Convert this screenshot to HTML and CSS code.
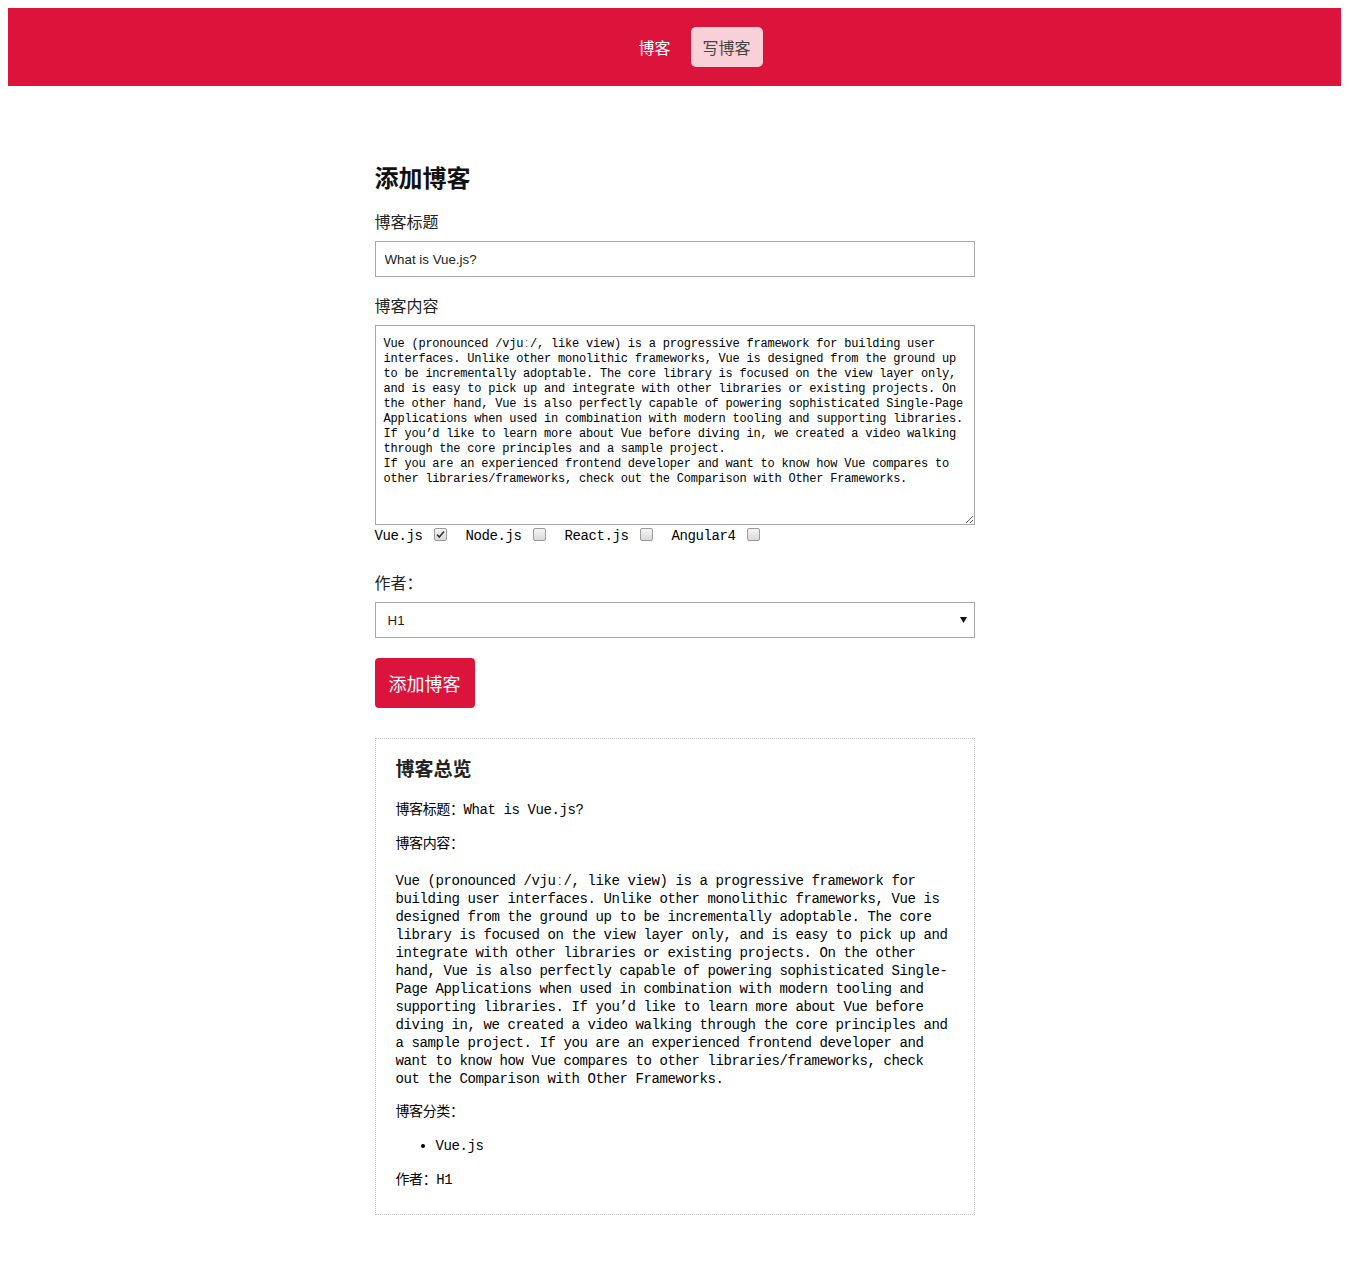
FILE: index.html
```html
<!DOCTYPE html>
<html lang="zh-CN">
<head>
<meta charset="utf-8">
<title>博客</title>
<link rel="stylesheet" href="styles.css">
</head>
<body>
<header class="topbar">
  <ul class="nav">
    <li><a class="nav-link" href="#">博客</a></li>
    <li><a class="nav-link active" href="#">写博客</a></li>
  </ul>
</header>
<main class="add-blog">
  <h2 class="page-title">添加博客</h2>
  <form class="blog-form">
    <label class="field-label">博客标题</label>
    <input class="text-input" type="text" value="What is Vue.js?">
    <label class="field-label">博客内容</label>
    <textarea class="content-input">Vue (pronounced /vjuː/, like view) is a progressive framework for building user interfaces. Unlike other monolithic frameworks, Vue is designed from the ground up to be incrementally adoptable. The core library is focused on the view layer only, and is easy to pick up and integrate with other libraries or existing projects. On the other hand, Vue is also perfectly capable of powering sophisticated Single-Page Applications when used in combination with modern tooling and supporting libraries.
If you’d like to learn more about Vue before diving in, we created a video walking through the core principles and a sample project.
If you are an experienced frontend developer and want to know how Vue compares to other libraries/frameworks, check out the Comparison with Other Frameworks.</textarea>
    <div class="categories">
      <label class="cat">Vue.js</label><input class="cat-box" type="checkbox" checked>
      <label class="cat">Node.js</label><input class="cat-box" type="checkbox">
      <label class="cat">React.js</label><input class="cat-box" type="checkbox">
      <label class="cat">Angular4</label><input class="cat-box" type="checkbox">
    </div>
    <label class="field-label author-label">作者：</label>
    <select class="select-input">
      <option>H1</option>
      <option>H2</option>
    </select>
    <button class="submit-btn" type="button">添加博客</button>
  </form>
  <section class="preview">
    <h3 class="preview-title">博客总览</h3>
    <p class="pv-line pv-first">博客标题：What is Vue.js?</p>
    <p class="pv-line">博客内容：</p>
    <p class="pv-body">Vue (pronounced /vjuː/, like view) is a progressive framework for building user interfaces. Unlike other monolithic frameworks, Vue is designed from the ground up to be incrementally adoptable. The core library is focused on the view layer only, and is easy to pick up and integrate with other libraries or existing projects. On the other hand, Vue is also perfectly capable of powering sophisticated Single-Page Applications when used in combination with modern tooling and supporting libraries. If you’d like to learn more about Vue before diving in, we created a video walking through the core principles and a sample project. If you are an experienced frontend developer and want to know how Vue compares to other libraries/frameworks, check out the Comparison with Other Frameworks.</p>
    <p class="pv-line">博客分类：</p>
    <ul class="pv-list">
      <li>Vue.js</li>
    </ul>
    <p class="pv-line pv-last">作者：H1</p>
  </section>
</main>
</body>
</html>
```
FILE: styles.css
```css
body {
  margin: 8px;
  font-family: "Liberation Mono", "Noto Sans CJK SC", monospace;
  color: #000;
  background: #fff;
}

.topbar {
  background: #dc143c;
  padding: 19px 0;
}

.nav {
  list-style: none;
  margin: 0;
  padding: 0 0 0 40px;
  display: flex;
  justify-content: center;
  gap: 8px;
}

.nav-link {
  display: block;
  height: 40px;
  line-height: 40px;
  padding: 0 12px;
  border-radius: 5px;
  color: #fff;
  text-decoration: none;
  font-family: "Noto Sans CJK SC", sans-serif;
  font-size: 16px;
}

.nav-link.active {
  background: #f8d0d7;
  color: #444;
}

.add-blog {
  width: 600px;
  margin: 77px auto 0;
}

.page-title {
  font-family: "Noto Sans CJK SC", sans-serif;
  font-size: 24px;
  font-weight: 700;
  line-height: 28px;
  margin: 0 0 20px;
  color: #111;
}

.blog-form {
  display: flex;
  flex-direction: column;
  align-items: flex-start;
}

.field-label {
  font-family: "Noto Sans CJK SC", sans-serif;
  font-size: 16px;
  line-height: 20px;
  margin-bottom: 10px;
  color: #222;
}

.text-input {
  box-sizing: border-box;
  width: 600px;
  height: 36px;
  padding: 0 9px;
  border: 1px solid #a9a9a9;
  font-family: "Liberation Sans", Arial, sans-serif;
  font-size: 13.33px;
  color: #222;
  margin: 0 0 18px;
}

.content-input {
  box-sizing: border-box;
  width: 600px;
  height: 200px;
  padding: 11px 8px 9px;
  border: 1px solid #a9a9a9;
  font-family: "Liberation Mono", "Noto Sans CJK SC", monospace;
  font-size: 12px;
  letter-spacing: -0.22px;
  line-height: 15px;
  color: #000;
  resize: vertical;
  margin: 0;
}

.categories {
  display: flex;
  align-items: center;
  height: 22px;
  margin-bottom: 25px;
}

.cat {
  font-family: "Liberation Mono", "Noto Sans CJK SC", monospace;
  font-size: 14px;
  letter-spacing: -0.4px;
  line-height: 20px;
}

.cat-box {
  appearance: none;
  -webkit-appearance: none;
  box-sizing: border-box;
  width: 13px;
  height: 13px;
  margin: 0 19px 3px 11px;
  border: 1px solid #9a9a9a;
  border-radius: 2px;
  background: linear-gradient(#f4f4f4, #dadada);
}

.cat-box:checked {
  background-image: url("data:image/svg+xml;utf8,<svg xmlns='http://www.w3.org/2000/svg' viewBox='0 0 11 11'><path d='M2 5.5 L4.3 8 L9 2.5' fill='none' stroke='%23333' stroke-width='1.6'/></svg>"), linear-gradient(#f4f4f4, #dadada);
  background-size: 100% 100%;
}

.select-input {
  appearance: none;
  -webkit-appearance: none;
  box-sizing: border-box;
  width: 600px;
  height: 36px;
  padding: 0 12px;
  border: 1px solid #a9a9a9;
  border-radius: 0;
  background: #fff url("data:image/svg+xml;utf8,<svg xmlns='http://www.w3.org/2000/svg' viewBox='0 0 7 6'><path d='M0 0 H7 L3.5 6 Z' fill='%23111'/></svg>") no-repeat right 7px center / 7px 6px;
  font-family: "Liberation Sans", Arial, sans-serif;
  font-size: 13.33px;
  color: #222;
  margin: 0 0 20px;
}

.submit-btn {
  width: 100px;
  height: 50px;
  border: 0;
  border-radius: 4px;
  background: #dc143c;
  color: #fff;
  font-family: "Noto Sans CJK SC", sans-serif;
  font-size: 18px;
  padding: 0;
  margin: 0 0 30px;
}

.preview {
  border: 1px dotted #c8c8c8;
  padding: 16px 20px 10px;
}

.preview-title {
  font-family: "Noto Sans CJK SC", sans-serif;
  font-size: 19px;
  font-weight: 700;
  line-height: 26px;
  margin: 0 0 12px;
  color: #222;
}

.pv-line {
  font-family: "Liberation Mono", "Noto Sans CJK SC", monospace;
  font-size: 14px;
  letter-spacing: -0.4px;
  line-height: 20px;
  margin: 0 0 14px;
}

.pv-first {
  margin-top: 19px;
}

.pv-body {
  font-family: "Liberation Mono", "Noto Sans CJK SC", monospace;
  font-size: 14px;
  letter-spacing: -0.4px;
  line-height: 18px;
  margin: 18px 0 14px;
}

.pv-list {
  font-family: "Liberation Mono", "Noto Sans CJK SC", monospace;
  font-size: 14px;
  letter-spacing: -0.4px;
  line-height: 20px;
  margin: 0 0 14px;
  padding-left: 40px;
}

.pv-last {
  margin-bottom: 14px;
}
```
